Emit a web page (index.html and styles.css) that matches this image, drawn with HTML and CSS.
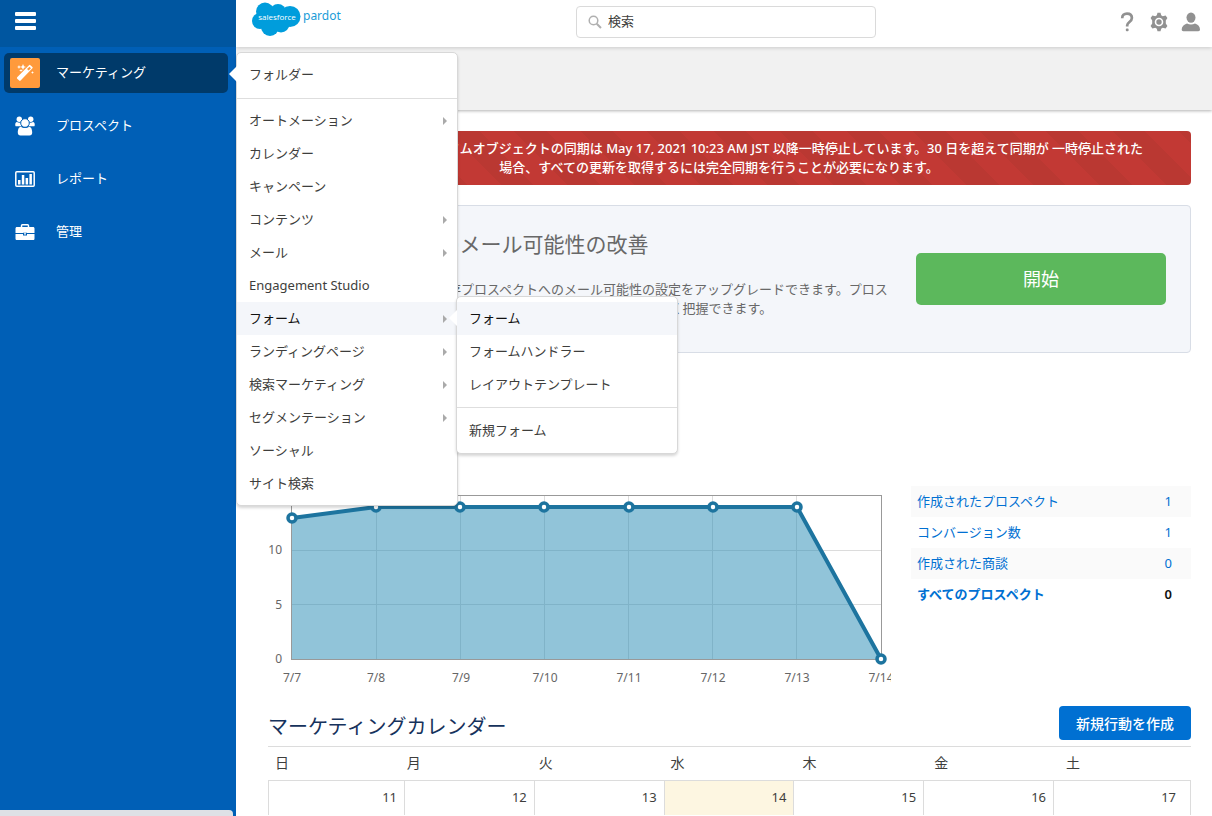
FILE: index.html
```html
<!DOCTYPE html>
<html lang="ja">
<head>
<meta charset="utf-8">
<title>Pardot</title>
<link rel="stylesheet" href="styles.css">
</head>
<body>
<div class="app">
  <aside class="sidebar">
    <div class="sidebar-top">
      <button class="icon-button burger" type="button" aria-label="ナビゲーション">
        <svg width="21" height="18" viewBox="0 0 21 18"><path fill="#fff" d="M1 0h19a1 1 0 0 1 1 1v2a1 1 0 0 1-1 1H1a1 1 0 0 1-1-1V1a1 1 0 0 1 1-1zM1 7h19a1 1 0 0 1 1 1v2a1 1 0 0 1-1 1H1a1 1 0 0 1-1-1V8a1 1 0 0 1 1-1zM1 14h19a1 1 0 0 1 1 1v2a1 1 0 0 1-1 1H1a1 1 0 0 1-1-1v-2a1 1 0 0 1 1-1z"/></svg>
      </button>
    </div>
    <nav>
      <ul class="nav">
        <li class="nav-item">
          <a class="nav-link active" href="#">
            <span class="nav-icon marketing">
              <svg width="18" height="18" viewBox="0 0 18 18" fill="#fff"><path d="M13 1.200a1 1 0 0 1 1.400 0l2 1.700a1 1 0 0 1 0 1.400L4.600 16.600a1 1 0 0 1-1.400 0l-2-1.900a1 1 0 0 1 0-1.400z"/><path d="M11 5l1.700 1.600 2.300-2.400-1.500-1.400z" fill="#ff9a3c"/><path d="M3 1l.6 1.400L5 3l-1.400.6L3 5l-.6-1.400L1 3l1.400-.6zM7 0l1 2.200L10 3l-2 .8L7 6l-1-2.200L4 3l2-.8zM5 5l.5 1L7 6.500l-1.500.5L5 8l-.5-1L3 6.500 4.500 6zM16.500 7l.4 1.100 1.100.4-1.100.4-.4 1.100-.4-1.100-1.100-.4 1.100-.4z"/></svg>
            </span>
            <span class="nav-label">マーケティング</span>
          </a>
          <div class="menu main-menu">
            <ul class="menu-list">
              <li><a href="#">フォルダー</a></li>
            </ul>
            <ul class="menu-list">
              <li><a class="has-sub" href="#">オートメーション</a></li>
              <li><a href="#">カレンダー</a></li>
              <li><a href="#">キャンペーン</a></li>
              <li><a class="has-sub" href="#">コンテンツ</a></li>
              <li><a class="has-sub" href="#">メール</a></li>
              <li><a href="#">Engagement Studio</a></li>
              <li class="sub-host">
                <a class="has-sub current" href="#">フォーム</a>
                <div class="menu sub-menu">
                  <ul class="menu-list">
                    <li><a class="current" href="#">フォーム</a></li>
                    <li><a href="#">フォームハンドラー</a></li>
                    <li><a href="#">レイアウトテンプレート</a></li>
                  </ul>
                  <ul class="menu-list">
                    <li><a href="#">新規フォーム</a></li>
                  </ul>
                </div>
              </li>
              <li><a class="has-sub" href="#">ランディングページ</a></li>
              <li><a class="has-sub" href="#">検索マーケティング</a></li>
              <li><a class="has-sub" href="#">セグメンテーション</a></li>
              <li><a href="#">ソーシャル</a></li>
              <li><a href="#">サイト検索</a></li>
            </ul>
          </div>
        </li>
        <li class="nav-item">
          <a class="nav-link" href="#">
            <span class="nav-icon">
              <svg width="20" height="20" viewBox="0 0 20 20" fill="#fff"><circle cx="4.300" cy="3.300" r="2.700"/><circle cx="15.700" cy="3.300" r="2.700"/><path d="M.3 9.500C0 7.500.8 6 2 6c1.500 1 3.200.8 4.200.3-.3 1.700.3 3.200 1.200 4H2C.9 10.500.4 10.200.3 9.500zM19.700 9.500C20 7.500 19.200 6 18 6c-1.500 1-3.200.8-4.200.3.3 1.700-.3 3.200-1.200 4H18c1.100.2 1.600-.1 1.700-.8z"/><circle cx="10" cy="7" r="4.300" stroke="#005fb6"/><path d="M5.800 10.800c2.300 1.600 6.100 1.600 8.400 0 2.300.3 3 3.400 3 5.700 0 1.900-1 2.900-2.700 2.900h-9c-1.700 0-2.700-1-2.700-2.900 0-2.300.7-5.400 3-5.700z"/></svg>
            </span>
            <span class="nav-label">プロスペクト</span>
          </a>
        </li>
        <li class="nav-item">
          <a class="nav-link" href="#">
            <span class="nav-icon">
              <svg width="20" height="16" viewBox="0 0 20 16"><rect x=".8" y=".8" width="18.400" height="14.400" rx="1" fill="none" stroke="#fff" stroke-width="1.500"/><path fill="#fff" d="M3 9h2.500v4.500H3zM6.800 4h2.500v9.500H6.800zM10.600 7h2.500v6.500h-2.500zM14.400 3h2.500v10.500h-2.500z"/></svg>
            </span>
            <span class="nav-label">レポート</span>
          </a>
        </li>
        <li class="nav-item">
          <a class="nav-link" href="#">
            <span class="nav-icon">
              <svg width="20" height="16" viewBox="0 0 20 16"><path fill="none" stroke="#fff" stroke-width="1.500" d="M6.500 3.500V1.700c0-.6.3-.9.900-.9h5.200c.6 0 .9.300.9.900v1.800"/><path fill="#fff" d="M2 3h16c1 0 1.500.6 1.500 1.500V9H12v-.2H8V9H.5V4.500C.5 3.600 1 3 2 3zM.5 10H8v1.500h4V10h7.500v4.500c0 1-.5 1.500-1.500 1.500H2c-1 0-1.500-.5-1.500-1.500zM9 9.200h2v1.300H9z"/></svg>
            </span>
            <span class="nav-label">管理</span>
          </a>
        </li>
      </ul>
    </nav>
  </aside>

  <div class="page">
    <header class="topbar">
      <a class="logo" href="#">
        <svg width="49" height="35" viewBox="0 0 49 35">
          <g fill="#009ddc"><circle cx="13" cy="9.500" r="9"/><circle cx="26" cy="10" r="8"/><circle cx="38" cy="14.500" r="10.500"/><circle cx="8" cy="19" r="8"/><circle cx="18" cy="25" r="9"/><circle cx="29" cy="22" r="8.500"/><path d="M8 8h30v16H8z"/></g>
          <text class="logo-mark" x="25" y="18" text-anchor="middle">salesforce</text>
        </svg>
        <span class="logo-name">pardot</span>
      </a>
      <label class="search">
        <svg width="14" height="14" viewBox="0 0 14 14" fill="none" stroke="#b0b0b0"><circle cx="5.500" cy="5.500" r="4.300" stroke-width="1.500"/><path d="M8.700 8.700l4.300 4.300" stroke-width="2"/></svg>
        <input type="search" aria-label="検索" placeholder="検索">
      </label>
      <div class="tools">
        <button class="icon-button" type="button" aria-label="ヘルプ">
          <svg width="20" height="20" viewBox="0 0 20 20"><path fill="none" stroke="#919191" stroke-width="2.700" d="M6.200 6.200C6.200 3.300 8 1.700 11 1.700s4.900 1.700 4.900 4.300c0 3.800-4.700 4-4.700 7.300v1.200"/><rect x="9.800" y="16.400" width="2.800" height="2.800" rx="1" fill="#919191"/></svg>
        </button>
        <button class="icon-button" type="button" aria-label="設定">
          <svg width="20" height="20" viewBox="-1 0 20 20"><path fill="#919191" fill-rule="evenodd" d="M8.500.8h3l.7 2.500 1.500.9 2.900-.8 1.800 2.600-1.600 2.400v3.200l1.600 2.400-1.800 2.600-2.900-.8-1.500.9-.7 2.500h-3l-.7-2.500-1.500-.9-2.900.8L1.600 14l1.600-2.400V8.400L1.600 6l1.800-2.600 2.900.8 1.500-.9zM10 5.700a4.300 4.300 0 1 0 0 8.600 4.300 4.300 0 1 0 0-8.600z"/><circle cx="10" cy="10" r="2.700" fill="#919191"/></svg>
        </button>
        <button class="icon-button" type="button" aria-label="ユーザー">
          <svg width="20" height="20" viewBox="-1 0 20 20" fill="#919191"><ellipse cx="10" cy="5.600" rx="4.500" ry="5.200"/><path d="M.7 17.500c0-3 2.200-5 5.300-6 2.400 1.300 5.600 1.300 8 0 3.100 1 5 3 5 6 0 1.200-.6 1.700-1.700 1.700H2.400C1.300 19.200.7 18.700.7 17.500z"/></svg>
        </button>
      </div>
    </header>
    <div class="subbar"></div>

    <main class="content">
      <p class="alert">重要な: Salesforce のカスタムオブジェクトの同期は May 17, 2021 10:23 AM JST 以降一時停止しています。30 日を超えて同期が 一時停止された<br>場合、すべての更新を取得するには完全同期を行うことが必要になります。</p>

      <section class="panel">
        <div class="panel-text">
          <h2>プロスペクトへのメール可能性の改善</h2>
          <p>新しい機能を使用して、既存プロスペクトへのメール可能性の設定をアップグレードできます。プロスペクトにメールを送信できるかどうかの状況を、より正確に詳しく把握できます。</p>
        </div>
        <button class="start" type="button">開始</button>
      </section>

      <section class="overview">
        <svg class="chart" viewBox="0 0 623 200" role="img" aria-label="プロスペクト数">
          <g stroke="#dcdcdc"><path d="M24 64.500H613M24 118.500H613M108.500 10V173M192.500 10V173M276.500 10V173M360.500 10V173M444.500 10V173M528.500 10V173"/></g>
          <rect x="23.500" y="9.500" width="590" height="164" fill="none" stroke="#999"/>
          <path fill="#2389b3" fill-opacity=".5" d="M24 32L108 21H529L613 173H24z"/>
          <path fill="none" stroke="#1d749f" stroke-width="4" stroke-linejoin="round" d="M24 32L108 21H529L613 173"/>
          <g fill="#fff" stroke="#1d749f" stroke-width="3.500"><circle cx="24" cy="32" r="4"/><circle cx="108" cy="21" r="4"/><circle cx="192" cy="21" r="4"/><circle cx="276" cy="21" r="4"/><circle cx="361" cy="21" r="4"/><circle cx="445" cy="21" r="4"/><circle cx="529" cy="21" r="4"/><circle cx="613" cy="173" r="4"/></g>
          <g class="axis" text-anchor="end"><text x="14" y="68">10</text><text x="14" y="123">5</text><text x="14" y="177">0</text></g>
          <g class="axis" text-anchor="middle"><text x="24" y="196">7/7</text><text x="108" y="196">7/8</text><text x="193" y="196">7/9</text><text x="277" y="196">7/10</text><text x="361" y="196">7/11</text><text x="445" y="196">7/12</text><text x="529" y="196">7/13</text><text x="613" y="196">7/14</text></g>
        </svg>
        <table class="stats">
          <tbody>
            <tr><th scope="row"><a href="#">作成されたプロスペクト</a></th><td><a href="#">1</a></td></tr>
            <tr><th scope="row"><a href="#">コンバージョン数</a></th><td><a href="#">1</a></td></tr>
            <tr><th scope="row"><a href="#">作成された商談</a></th><td><a href="#">0</a></td></tr>
            <tr class="total"><th scope="row"><a href="#">すべてのプロスペクト</a></th><td>0</td></tr>
          </tbody>
        </table>
      </section>

      <section>
        <div class="calendar-head">
          <h2>マーケティングカレンダー</h2>
          <button class="create" type="button">新規行動を作成</button>
        </div>
        <table class="weekdays">
          <thead><tr><th>日</th><th>月</th><th>火</th><th>水</th><th>木</th><th>金</th><th>土</th></tr></thead>
        </table>
        <table class="days">
          <tbody><tr><td class="first">11</td><td>12</td><td>13</td><td class="today">14</td><td>15</td><td>16</td><td class="last">17</td></tr></tbody>
        </table>
      </section>
    </main>
  </div>
</div>
<div class="status"></div>
</body>
</html>
```
FILE: styles.css
```css
* { box-sizing: border-box; }

body {
  margin: 0;
  height: 100vh;
  overflow: hidden;
  background: #fff;
  color: #3e3e3c;
  font: 13px/19px "Noto Sans", "Noto Sans CJK JP", sans-serif;
}

h2, p, ul { margin: 0; padding: 0; font-weight: 400; }
ul { list-style: none; }
a { color: #0070d2; text-decoration: none; }
button, input { font-family: inherit; }
table { width: 100%; border-collapse: collapse; }
svg { display: block; }

.icon-button { padding: 0; border: 0; background: none; }

.app { display: flex; height: 100vh; }

/* Sidebar */
.sidebar {
  position: relative;
  z-index: 2;
  flex: 0 0 236px;
  background: #005fb6;
}
.sidebar-top {
  height: 47px;
  padding: 12px 15px;
  background: #0056a0;
}
.nav {
  display: flex;
  flex-direction: column;
  gap: 13px;
  padding: 6px 8px 0 4px;
}
.nav-item { position: relative; }
.nav-link {
  display: flex;
  align-items: center;
  gap: 16px;
  height: 40px;
  padding: 0 6px;
  border-radius: 5px;
  color: #fff;
}
.nav-link.active { background: #003a6a; }
.nav-label { padding-bottom: 2px; }
.nav-icon {
  display: grid;
  place-items: center;
  width: 30px;
  height: 30px;
  border-radius: 2px;
}
.nav-icon.marketing { background: #ff9a3c; }

/* Menus */
.menu {
  position: absolute;
  width: 222px;
  border: 1px solid #d8d8d8;
  border-radius: 5px;
  background: #fff;
  box-shadow: 0 2px 3px rgba(0, 0, 0, .16);
}
.menu::before {
  content: "";
  position: absolute;
  left: -8px;
  top: 13px;
  border: 8px solid transparent;
  border-left: 0;
  border-right-color: #fff;
}
.main-menu { left: 232px; top: -1px; }
.sub-menu { left: 219px; top: -6px; }
.menu-list { padding: 5px 0; }
.menu-list:first-child { padding-bottom: 7px; }
.menu-list + .menu-list { border-top: 1px solid #dedede; }
.sub-menu .menu-list:first-child { padding-bottom: 6px; }
.sub-menu .menu-list + .menu-list { padding: 6px 0; }
.menu-list a {
  display: flex;
  align-items: center;
  justify-content: space-between;
  height: 33px;
  padding: 0 10px 0 12px;
  color: #3e3e3c;
}
.menu-list a.current { background: #f4f6fa; color: #111; }
.has-sub::after {
  content: "";
  border: 4px solid transparent;
  border-right: 0;
  border-left-color: #aaa;
}
.sub-host { position: relative; }

/* Top bar */
.page { flex: 1; min-width: 0; }
.topbar {
  position: relative;
  display: grid;
  grid-template-columns: 1fr 300px 1fr;
  height: 47px;
  padding: 0 12px 0 16px;
  background: #fff;
  box-shadow: 0 1px 4px rgba(0, 0, 0, .16);
}
.logo {
  display: flex;
  align-items: flex-start;
  gap: 2px;
  padding-top: 2px;
}
.logo-mark { fill: #fff; font: 8px "Open Sans", sans-serif; }
.logo-name { padding-top: 4px; color: #1a9cd8; font-size: 12px; }
.search {
  display: flex;
  align-items: center;
  gap: 6px;
  height: 32px;
  margin-top: 6px;
  padding: 0 12px 0 11px;
  border: 1px solid #dadada;
  border-radius: 4px;
}
.search input {
  flex: 1;
  min-width: 0;
  padding: 0 0 2px;
  border: 0;
  outline: 0;
  background: none;
  font-size: 13px;
}
.search input::placeholder { color: #3e3e3c; }
.tools {
  display: flex;
  align-items: flex-start;
  justify-content: flex-end;
  gap: 12px;
  padding-top: 12px;
}
.subbar {
  height: 63px;
  background: #f1f1f1;
  box-shadow: 0 1px 3px rgba(0, 0, 0, .3);
}

/* Content */
.content { padding: 21px 21px 0 32px; }
.alert {
  padding: 8px 31px 8px 10px;
  border-radius: 4px;
  background: repeating-linear-gradient(45deg, #c23934 0 24px, #ba3832 24px 47px);
  color: #fff;
  font-weight: 500;
  text-align: center;
}
.panel {
  display: flex;
  align-items: center;
  gap: 20px;
  min-height: 148px;
  margin-top: 20px;
  padding: 0 24px;
  border: 1px solid #d8dde6;
  border-radius: 4px;
  background: #f4f6fa;
  color: #686868;
}
.panel-text { flex: 1; align-self: flex-start; padding-top: 22px; }
.panel h2 { margin-bottom: 20px; font-size: 21px; line-height: 32px; }
.start {
  width: 250px;
  height: 52px;
  padding: 0 0 3px;
  border: 0;
  border-radius: 5px;
  background: #5cb85c;
  color: #fff;
  font-size: 18px;
}

.overview {
  display: grid;
  grid-template-columns: 1fr 280px;
  align-items: start;
  gap: 20px;
  margin-top: 133px;
}
.chart { width: 100%; }
.axis { fill: #666; font-size: 12px; }
.stats th {
  padding: 6px;
  font-weight: inherit;
  text-align: left;
}
.stats td { padding: 6px 19px; text-align: right; }
.stats tr:nth-child(odd) { background: #fafafa; }
.stats .total { color: #111; font-weight: 600; }

/* Calendar */
.calendar-head {
  display: flex;
  align-items: flex-end;
  justify-content: space-between;
  margin-top: 20px;
  padding-bottom: 6px;
  border-bottom: 1px solid #dcdcdc;
}
.calendar-head h2 { color: #16325c; font-size: 20px; line-height: 26px; }
.create {
  height: 34px;
  padding: 0 17px;
  border: 0;
  border-radius: 4px;
  background: #0070d2;
  color: #fff;
  font-size: 14px;
  font-weight: 500;
}
.weekdays, .days { table-layout: fixed; }
.weekdays th {
  height: 33px;
  padding: 0 7px 2px;
  font-size: 14px;
  font-weight: 400;
  text-align: left;
}
.days td {
  height: 34px;
  padding: 7px;
  border: 1px solid #dcdcdc;
  border-bottom: 0;
  text-align: right;
  vertical-align: top;
}
.days .first { width: 136px; }
.days .last { width: 137px; padding-right: 14px; }
.days .today { background: #fdf6e1; }

/* Link status bubble */
.status {
  position: fixed;
  z-index: 3;
  left: 0;
  bottom: 0;
  width: 233px;
  height: 6px;
  border-radius: 0 4px 0 0;
  background: #dee1e6;
}
```
